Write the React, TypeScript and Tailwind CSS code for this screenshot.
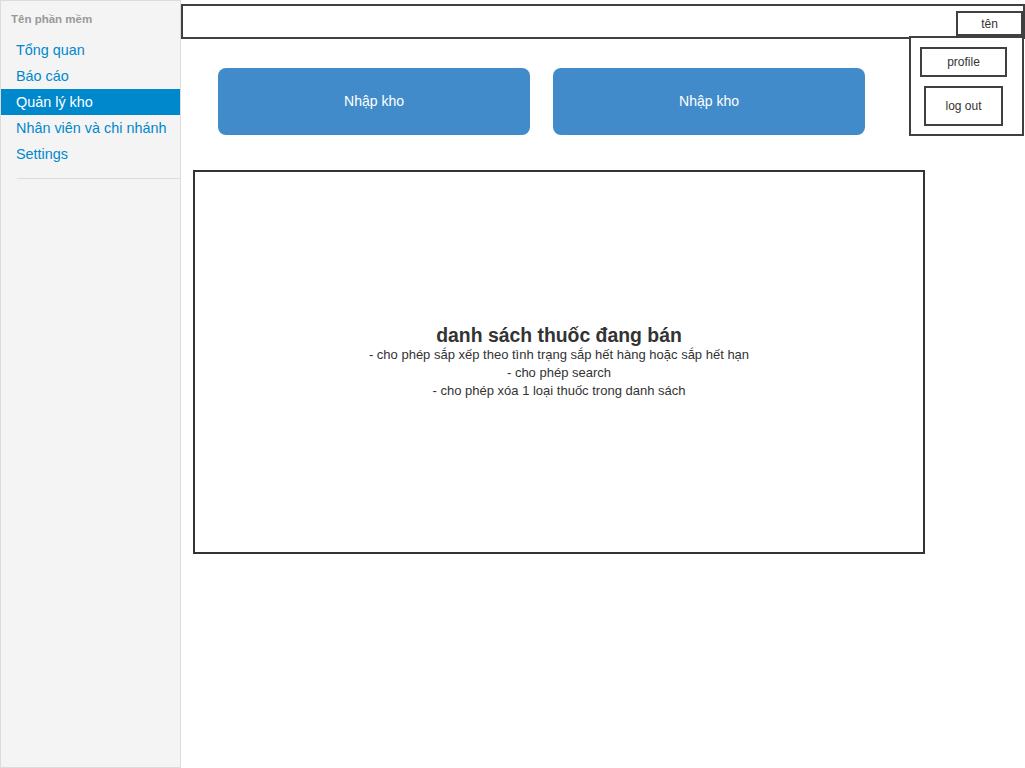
import React from 'react';

const menu = ['Tổng quan', 'Báo cáo', 'Quản lý kho', 'Nhân viên và chi nhánh', 'Settings'];

export default function App() {
  const active = 'Quản lý kho';

  return (
    <div className="flex h-[768px] w-[1025px] overflow-hidden bg-white font-['Liberation_Sans',Arial,sans-serif]">
      {/* sidebar */}
      <aside className="flex h-full w-[181px] shrink-0 flex-col border border-[#dcdcdc] bg-[#f4f4f4]">
        <div className="h-[36px] pl-[10px] pt-[11px] text-[11.5px] font-bold leading-[14px] text-[#999]">Tên phần mềm</div>
        <nav className="flex flex-col">
          {menu.map((item) => (
            <div
              key={item}
              className={
                item === active
                  ? 'h-[26px] bg-[#0088cc] pl-[15px] text-[14.4px] leading-[26px] text-white'
                  : 'h-[26px] pl-[15px] text-[14.4px] leading-[26px] text-[#0088cc]'
              }
            >
              {item}
            </div>
          ))}
        </nav>
        <div className="ml-[16px] mt-[11px] h-px bg-[#dcdcdc]" />
      </aside>

      {/* main */}
      <main className="relative flex flex-1 flex-col">
        <div className="mt-[4px] flex h-[35px] items-end justify-end border-2 border-[#404040] pb-[1px]">
          <div className="flex h-[25px] w-[67px] items-center justify-center border-2 border-[#404040] text-[12px] text-[#333]">
            tên
          </div>
        </div>

        <div className="ml-[37px] mt-[29px] flex gap-[23px]">
          <button className="flex h-[67px] w-[312px] items-center justify-center rounded-[8px] bg-[#428bca] text-[14px] text-white">
            Nhập kho
          </button>
          <button className="flex h-[67px] w-[312px] items-center justify-center rounded-[8px] bg-[#428bca] text-[14px] text-white">
            Nhập kho
          </button>
        </div>

        <div className="ml-[12px] mt-[35px] flex h-[384px] w-[732px] flex-col items-center justify-center border-2 border-[#333] text-[#333]">
          <div className="text-[19.4px] font-bold leading-[22px]">danh sách thuốc đang bán</div>
          <div className="text-[13px] leading-[18px]">- cho phép sắp xếp theo tình trạng sắp hết hàng hoặc sắp hết hạn</div>
          <div className="text-[13px] leading-[18px]">- cho phép search</div>
          <div className="text-[13px] leading-[18px]">- cho phép xóa 1 loại thuốc trong danh sách</div>
        </div>

        {/* user dropdown */}
        <div className="absolute left-[728px] top-[36px] flex h-[100px] w-[115px] flex-col border-2 border-[#404040] bg-white">
          <div className="ml-[9px] mt-[9px] flex h-[30px] w-[87px] items-center justify-center border-2 border-[#404040] text-[12px] text-[#333]">
            profile
          </div>
          <div className="ml-[13px] mt-[9px] flex h-[40px] w-[79px] items-center justify-center border-2 border-[#404040] text-[12px] text-[#333]">
            log out
          </div>
        </div>
      </main>
    </div>
  );
}
